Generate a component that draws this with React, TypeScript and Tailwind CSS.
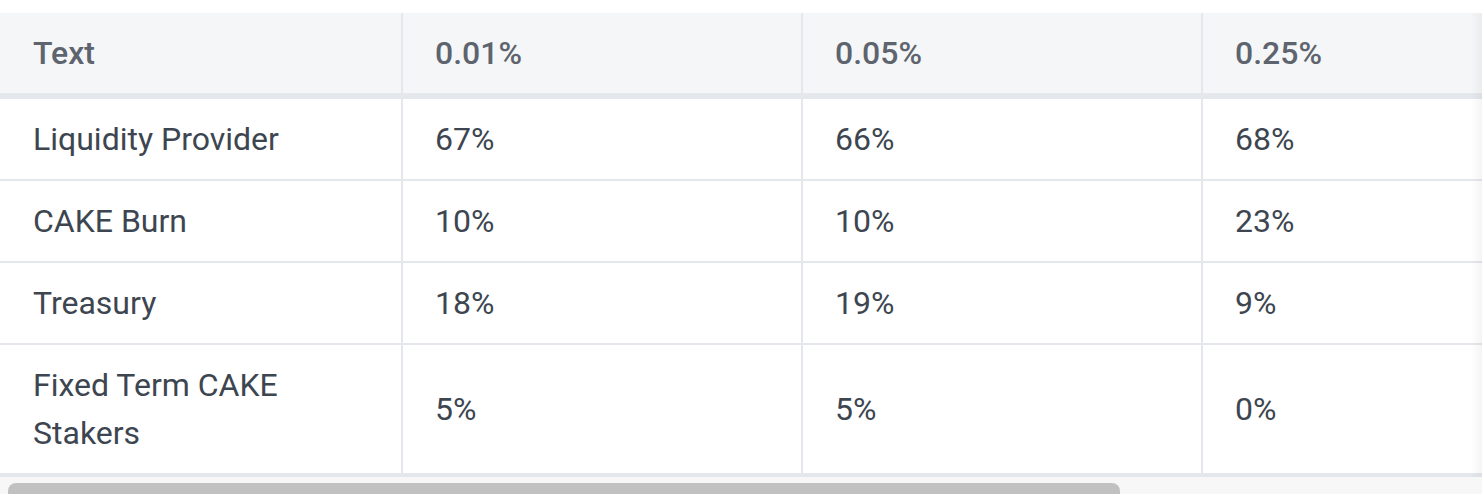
import React from "react";

const columns = ["Text", "0.01%", "0.05%", "0.25%", "1%"];

const rows: string[][] = [
    ["Liquidity Provider", "67%", "66%", "68%", "68%"],
    ["CAKE Burn", "10%", "10%", "23%", "23%"],
    ["Treasury", "18%", "19%", "9%", "9%"],
    ["Fixed Term CAKE Stakers", "5%", "5%", "0%", "0%"],
];

export default function App() {
    return (
        <div
            className="w-[1482px] h-[494px] bg-white pt-[13px] overflow-hidden"
            style={{ fontFamily: "Roboto, 'Liberation Sans', sans-serif" }}
        >
            {/* Scrollable table area */}
            <div className="relative w-full overflow-hidden">
                <div className="w-[2001px] text-[32px] leading-[48px]">
                    {/* Header */}
                    <div className="flex h-[86px] bg-[#f5f6f8] border-b-[6px] border-[#e4e7eb]">
                        {columns.map((c, i) => (
                            <div
                                key={c}
                                className={`flex items-center shrink-0 font-medium text-[#5d646d] ${i === 0 ? "w-[401px] pl-[33px]" : "w-[400px] pl-[32px] border-l-2 border-[#e4e7eb]"}`}
                            >
                                {c}
                            </div>
                        ))}
                    </div>

                    {/* Body */}
                    {rows.map((row, r) => {
                        const last = r === rows.length - 1;
                        return (
                            <div
                                key={r}
                                className={`flex border-[#e4e7eb] ${last ? "h-[132px] border-b-4" : "h-[82px] border-b-2"}`}
                            >
                                {row.map((cell, i) => (
                                    <div
                                        key={i}
                                        className={`flex items-center shrink-0 text-[#3d4650] ${i === 0 ? "w-[401px] pl-[33px] pr-[100px]" : "w-[400px] pl-[32px] border-l-2 border-[#e4e7eb]"}`}
                                    >
                                        {cell}
                                    </div>
                                ))}
                            </div>
                        );
                    })}
                </div>

                {/* Right scroll shadow */}
                <div className="absolute top-0 right-0 h-full w-[12px] bg-gradient-to-r from-transparent to-black/[0.04]" />
            </div>

            {/* Horizontal scrollbar */}
            <div className="h-[17px] bg-[#f7f7f7] pt-[6px] pl-[8px]">
                <div className="w-[1112px] h-[20px] rounded-[8px] bg-[#c1c1c1]" />
            </div>
        </div>
    );
}
